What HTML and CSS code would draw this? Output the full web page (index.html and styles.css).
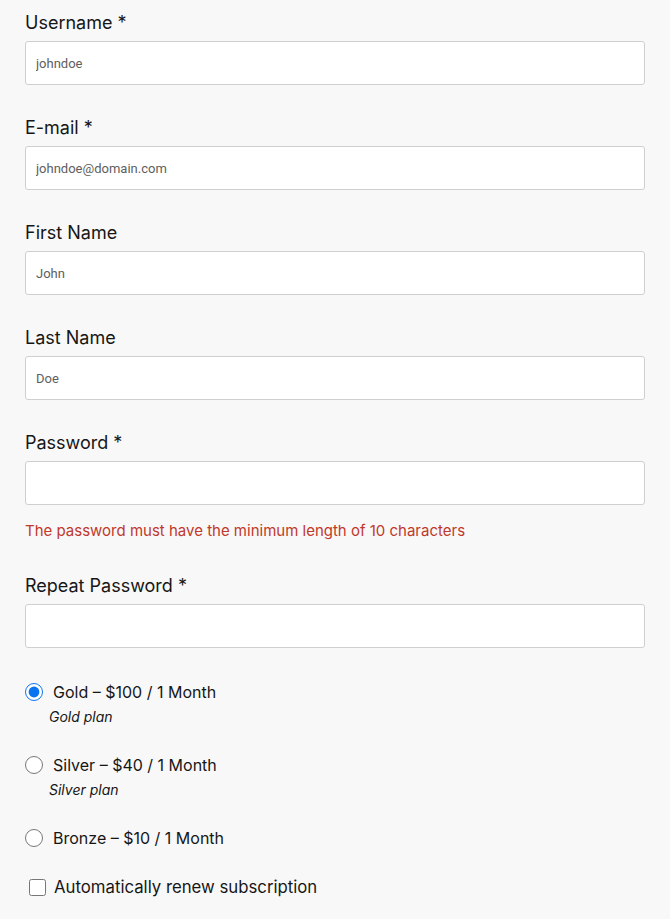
FILE: index.html
```html
<!DOCTYPE html>
<html lang="en">
<head>
  <meta charset="UTF-8">
  <meta name="viewport" content="width=device-width, initial-scale=1.0">
  <title>Register</title>
  <link rel="stylesheet" href="styles.css">
</head>
<body>

  <form class="register">
    <div class="field">
      <label for="username">Username *</label>
      <input type="text" id="username" value="johndoe">
    </div>

    <div class="field">
      <label for="email">E-mail *</label>
      <input type="text" id="email" value="johndoe@domain.com">
    </div>

    <div class="field">
      <label for="first">First Name</label>
      <input type="text" id="first" value="John">
    </div>

    <div class="field">
      <label for="last">Last Name</label>
      <input type="text" id="last" value="Doe">
    </div>

    <div class="field">
      <label for="pass">Password *</label>
      <input type="password" id="pass">
      <p class="error">The password must have the minimum length of 10 characters</p>
    </div>

    <div class="field">
      <label for="pass2">Repeat Password *</label>
      <input type="password" id="pass2">
    </div>

    <div class="plans">
      <div class="plan">
        <label class="radio"><input type="radio" name="plan" checked> Gold – $100 / 1 Month</label>
        <p class="plan-desc">Gold plan</p>
      </div>
      <div class="plan">
        <label class="radio"><input type="radio" name="plan"> Silver – $40 / 1 Month</label>
        <p class="plan-desc">Silver plan</p>
      </div>
      <div class="plan">
        <label class="radio"><input type="radio" name="plan"> Bronze – $10 / 1 Month</label>
      </div>
    </div>

    <label class="check"><input type="checkbox"> Automatically renew subscription</label>
  </form>

</body>
</html>
```

FILE: styles.css
```css
body {
  margin: 0;
  background: #f8f8f8;
  font-family: 'Inter', 'Noto Sans', sans-serif;
  color: #161616;
}

.register {
  padding: 11px 25px 20px;
}

.field {
  margin-bottom: 31px;
}

.field label {
  display: block;
  font-size: 18px;
  line-height: 24px;
  margin-bottom: 6px;
}

.field input {
  display: block;
  box-sizing: border-box;
  width: 100%;
  height: 44px;
  padding: 0 10px;
  background: #fff;
  border: 1px solid #cfcfcf;
  border-radius: 3px;
  font-family: 'Roboto', sans-serif;
  font-size: 13px;
  color: #5e5e5e;
  outline: none;
}

.error {
  margin: 16px 0 0;
  padding-bottom: 2px;
  font-size: 15px;
  line-height: 20px;
  color: #c0392b;
}

.plans {
  padding-top: 1px;
}

.plan {
  margin-bottom: 26px;
}

.radio {
  display: flex;
  align-items: center;
  font-size: 16px;
  line-height: 24px;
}

.radio input {
  width: 18px;
  height: 18px;
  margin: 0 10px 0 0;
  accent-color: #0a74f0;
}

.plan-desc {
  margin: 3px 0 0 24px;
  font-size: 14px;
  line-height: 20px;
  font-style: italic;
}

.check {
  display: flex;
  align-items: center;
  font-size: 16.75px;
  line-height: 24px;
  margin-top: -1px;
}

.check input {
  width: 17px;
  height: 17px;
  margin: 0 8px 0 4px;
}
```
